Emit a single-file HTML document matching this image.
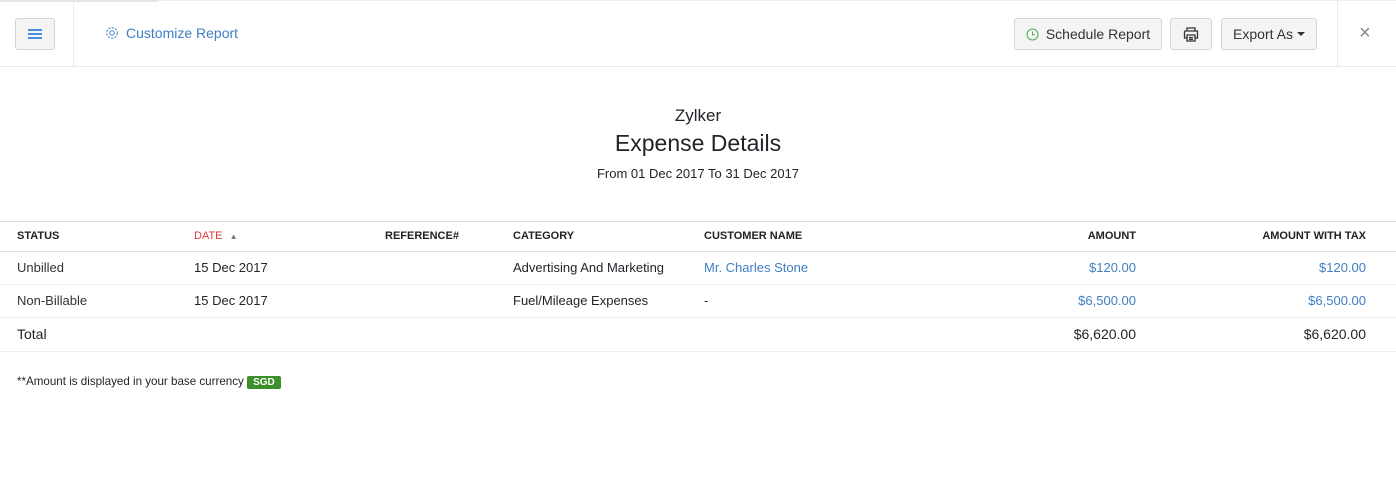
<!DOCTYPE html>
<html><head><meta charset="utf-8"><style>
*{box-sizing:border-box;margin:0;padding:0}
body{width:1396px;height:499px;background:#fff;font-family:"Liberation Sans",sans-serif;color:#212529;position:relative;overflow:hidden}
.a{position:absolute}
.btn{position:absolute;top:18px;height:32px;border:1px solid #d6d6d6;border-radius:3px;background:#f4f4f4;font-size:14px;color:#333;display:flex;align-items:center;justify-content:center}
.t{position:absolute;font-size:13px;white-space:nowrap}
.h{font-size:11px;font-weight:bold;color:#222;top:230px}
.line{position:absolute;left:0;width:1396px;height:1px;background:#e2e2e2}
.r{text-align:right}
.blue{color:#3f7fc4}
</style></head><body>
<div class="a" style="left:0;top:0;width:157px;height:2px;background:#e4e4e4"></div>
<div class="a" style="left:157px;top:0;width:1239px;height:1px;background:#eee"></div>
<div class="line" style="top:66px;background:#eaeaea"></div>
<div class="a" style="left:73px;top:1px;width:1px;height:65px;background:#eaeaea"></div>
<div class="a" style="left:1337px;top:1px;width:1px;height:65px;background:#eaeaea"></div>
<div class="btn" style="left:15px;width:40px"><svg width="14" height="10"><path d="M0 1h14M0 5h14M0 9h14" stroke="#2f7fd8" stroke-width="1.8"/></svg></div>
<div class="t blue" style="left:105px;top:25px;font-size:14px;display:flex;align-items:center"><svg width="14" height="14" viewBox="0 0 14 14" style="margin-right:7px"><circle cx="7" cy="7" r="2.2" fill="none" stroke="#3f7fc4"/><circle cx="7" cy="7" r="5.3" fill="none" stroke="#3f7fc4" stroke-dasharray="2.2 1.3"/></svg>Customize Report</div>
<div class="btn" style="left:1014px;width:148px"><svg width="13" height="13" style="margin-right:7px"><circle cx="6.5" cy="6.5" r="5.5" fill="none" stroke="#4caf50"/><path d="M6.5 3.5v3.3h2.3" fill="none" stroke="#4caf50"/></svg>Schedule Report</div>
<div class="btn" style="left:1170px;width:42px"><svg width="16" height="15" viewBox="0 0 16 15"><path d="M4 4V1h8v3M1.5 4h13v7H12M4 11H1.5V4M4 8h8v6H4z M6 10.5h4M6 12.3h4" fill="none" stroke="#333" stroke-width="1.3"/></svg></div>
<div class="btn" style="left:1221px;width:96px">Export As <span style="margin-left:4px;border-left:4px solid transparent;border-right:4px solid transparent;border-top:4px solid #333"></span></div>
<div class="t" style="left:1359px;top:22px;font-size:20px;color:#888">×</div>
<div class="t" style="left:0;width:1396px;text-align:center;top:106px;font-size:17px">Zylker</div>
<div class="t" style="left:0;width:1396px;text-align:center;top:130px;font-size:23px">Expense Details</div>
<div class="t" style="left:0;width:1396px;text-align:center;top:166px;font-size:13px">From 01 Dec 2017 To 31 Dec 2017</div>
<div class="line" style="top:221px;background:#ddd"></div>
<div class="t h" style="left:17px">STATUS</div>
<div class="t h" style="left:194px;color:#e0393e;font-weight:normal">DATE <span style="color:#777;font-size:8px;margin-left:4px">▲</span></div>
<div class="t h" style="left:385px">REFERENCE#</div>
<div class="t h" style="left:513px">CATEGORY</div>
<div class="t h" style="left:704px">CUSTOMER NAME</div>
<div class="t h r" style="left:1000px;width:136px">AMOUNT</div>
<div class="t h r" style="left:1200px;width:166px">AMOUNT WITH TAX</div>
<div class="line" style="top:251px"></div>
<div class="t" style="left:17px;top:260px;color:#333">Unbilled</div>
<div class="t" style="left:194px;top:260px">15 Dec 2017</div>
<div class="t" style="left:513px;top:260px">Advertising And Marketing</div>
<div class="t blue" style="left:704px;top:260px">Mr. Charles Stone</div>
<div class="t blue r" style="left:1000px;width:136px;top:260px">$120.00</div>
<div class="t blue r" style="left:1200px;width:166px;top:260px">$120.00</div>
<div class="line" style="top:284px;background:#eee"></div>
<div class="t" style="left:17px;top:293px;color:#333">Non-Billable</div>
<div class="t" style="left:194px;top:293px">15 Dec 2017</div>
<div class="t" style="left:513px;top:293px">Fuel/Mileage Expenses</div>
<div class="t" style="left:704px;top:293px">-</div>
<div class="t blue r" style="left:1000px;width:136px;top:293px">$6,500.00</div>
<div class="t blue r" style="left:1200px;width:166px;top:293px">$6,500.00</div>
<div class="line" style="top:317px;background:#eee"></div>
<div class="t" style="left:17px;top:326px;font-size:14px">Total</div>
<div class="t r" style="left:1000px;width:136px;top:326px;font-size:14px">$6,620.00</div>
<div class="t r" style="left:1200px;width:166px;top:326px;font-size:14px">$6,620.00</div>
<div class="line" style="top:351px;background:#eee"></div>
<div class="t" style="left:17px;top:375px;font-size:11.6px">**Amount is displayed in your base currency <span style="background:#3c8f2a;color:#fff;font-weight:bold;font-size:10px;padding:1px 6px;border-radius:2px">SGD</span></div>
</body></html>
